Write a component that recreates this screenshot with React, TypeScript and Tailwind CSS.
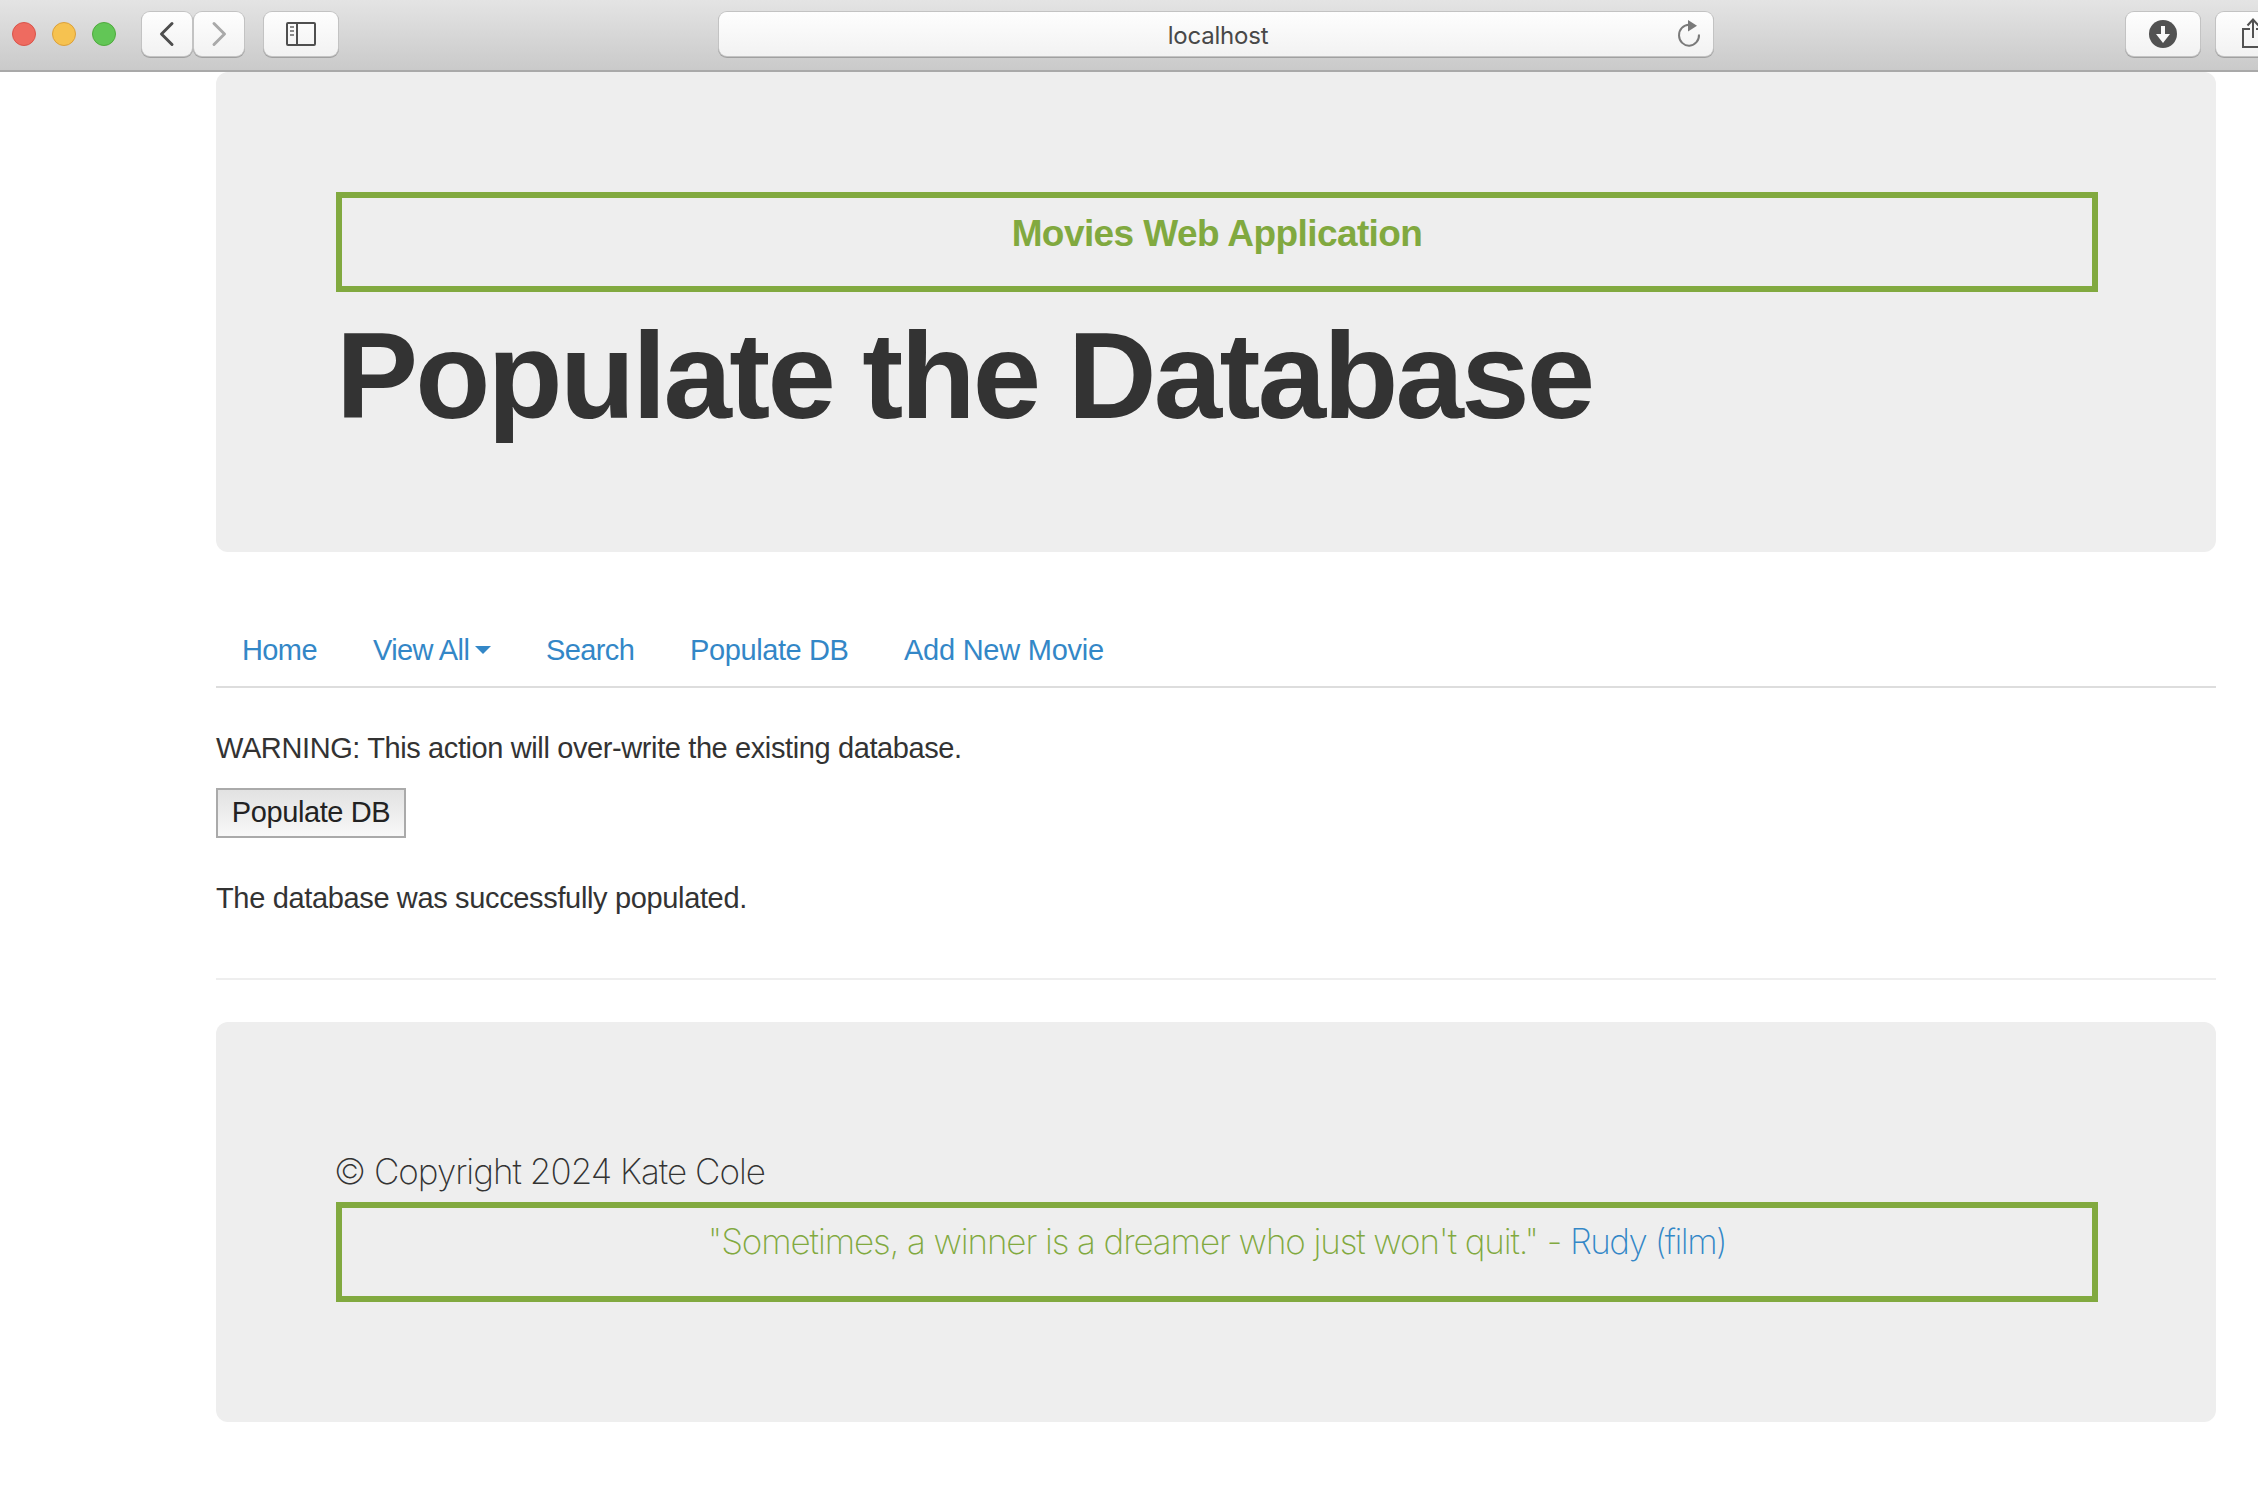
import type { ReactNode } from "react";

const BUTTON =
  "flex h-11 shrink-0 items-center justify-center rounded-lg bg-linear-to-b from-[#fefefe] to-[#f2f2f2] shadow-[0_0_0_1px_#c3c3c3,0_1px_0_1px_#a0a0a0]";

function TrafficLights() {
  return (
    <div className="ml-3 flex gap-4">
      <span className="size-6 rounded-full border border-[#d9544a] bg-[#ee6b60]" />
      <span className="size-6 rounded-full border border-[#dba03b] bg-[#f6c250]" />
      <span className="size-6 rounded-full border border-[#4faa3d] bg-[#62c656]" />
    </div>
  );
}

function Toolbar() {
  return (
    <header className="flex h-18 w-full items-center overflow-hidden border-b-2 border-[#a9a9a9] bg-linear-to-b from-[#e4e4e4] to-[#cacaca] pb-0.5">
      <TrafficLights />
      <button className={`${BUTTON} ml-[26px] w-[50px]`}>
        <svg width="50" height="44" fill="none" stroke="#4e4e4e" strokeWidth="3" strokeLinecap="round" strokeLinejoin="round">
          <path d="M30 11.500 19.500 22 30 32.500" />
        </svg>
      </button>
      <button className={`${BUTTON} ml-0.5 w-[50px]`}>
        <svg width="50" height="44" fill="none" stroke="#a9a9a9" strokeWidth="3" strokeLinecap="round" strokeLinejoin="round">
          <path d="M20 11.500 30.500 22 20 32.500" />
        </svg>
      </button>
      <button className={`${BUTTON} ml-5 w-[74px]`}>
        <svg width="74" height="44" fill="none" stroke="#4f4f4f" strokeWidth="2">
          <rect x="23" y="11" width="28" height="22" rx="1" />
          <path d="M33 11V33" />
          <path d="M26 15H30M26 19H30M26 23H30" stroke="#8a8a8a" />
        </svg>
      </button>
      <div className={`${BUTTON} relative ml-[381px] w-[994px]`}>
        <span className="pt-1 pl-1 font-[Inter] text-[24px] tracking-[-0.2px] text-[#484848]">localhost</span>
        <svg className="absolute top-0 right-0" width="50" height="44" fill="none" stroke="#7a7a7a" strokeWidth="2">
          <path d="M26 12.700A10 10.500 0 1 0 36 22.500" />
          <path d="M25 8V19.500L34 13.700Z" fill="#7a7a7a" stroke="none" />
        </svg>
      </div>
      <button className={`${BUTTON} ml-[413px] w-[74px]`}>
        <svg width="74" height="44">
          <circle cx="37" cy="22" r="14" fill="#525252" />
          <path d="M35 14H39V22H44L37 31 30 22H35Z" fill="#fafafa" />
        </svg>
      </button>
      <button className={`${BUTTON} ml-4 w-[74px]`}>
        <svg width="74" height="44" fill="none" stroke="#525252" strokeWidth="2">
          <path d="M34 17H27V35H47V17H40" />
          <path d="M37 26V7.500M31.500 13.500 37 7.500 42.500 13.500" />
        </svg>
      </button>
    </header>
  );
}

function Banner({ children }: { children: ReactNode }) {
  return (
    <div className="h-[100px] w-[1762px] border-6 border-[#81a93f] text-center text-[#81a93f]">
      {children}
    </div>
  );
}

function Nav() {
  return (
    <nav className="mt-[62px] flex gap-14 border-b-2 border-[#ddd] pt-4 pb-4 pl-[26px] whitespace-nowrap text-[#3387c7]">
      <a className="w-[75px] tracking-[-0.6px]">Home</a>
      <a className="flex w-[117px] items-center gap-1.5">
        <span className="tracking-[-0.6px]">View All</span>
        <span className="border-x-8 border-t-8 border-x-transparent border-t-[#3387c7]" />
      </a>
      <a className="w-[88px] tracking-[-0.6px]">Search</a>
      <a className="w-[158px] tracking-[-0.4px]">Populate DB</a>
      <a className="tracking-[-0.25px]">Add New Movie</a>
    </nav>
  );
}

export default function App() {
  return (
    <div className="h-[1500px] w-[2258px] overflow-hidden bg-white font-['Liberation_Sans',Arial,sans-serif] text-[29px] leading-[40px] text-[#333]">
      <Toolbar />
      <main className="ml-[216px] w-[2000px]">
        <section className="h-[480px] rounded-xl bg-[#eee] p-[120px]">
          <Banner>
            <p className="pt-1.5 text-[37px] leading-[60px] font-bold tracking-[-0.58px]">Movies Web Application</p>
          </Banner>
          <h1 className="mt-6 text-[123px] leading-[120px] font-bold tracking-[-2.8px] [word-spacing:-2px] whitespace-nowrap">
            Populate the Database
          </h1>
        </section>
        <Nav />
        <p className="mt-10 tracking-[-0.39px]">WARNING: This action will over-write the existing database.</p>
        <button className="mt-5 flex h-[50px] w-[190px] items-center justify-center border-2 border-[#aaa] bg-linear-to-b from-[#e2e2e2] to-[#f8f8f8] pb-0.5 tracking-[-0.4px] text-[#222]">
          Populate DB
        </button>
        <p className="mt-10 tracking-[-0.35px]">The database was successfully populated.</p>
        <hr className="mt-[60px] border-t-2 border-[#eee]" />
        <footer className="mt-[42px] h-[400px] rounded-xl bg-[#eee] px-[120px] pt-[119px] font-[Inter] text-[35px] leading-[60px] font-[250]">
          <p className="-ml-0.5 pb-px tracking-[-0.97px]">© Copyright 2024 Kate Cole</p>
          <Banner>
            <p className="pt-[3px] tracking-[-1.1px]">
              "Sometimes, a winner is a dreamer who just won't quit." - <a className="tracking-[-1.5px] text-[#3387c7]">Rudy (film)</a>
            </p>
          </Banner>
        </footer>
      </main>
    </div>
  );
}
